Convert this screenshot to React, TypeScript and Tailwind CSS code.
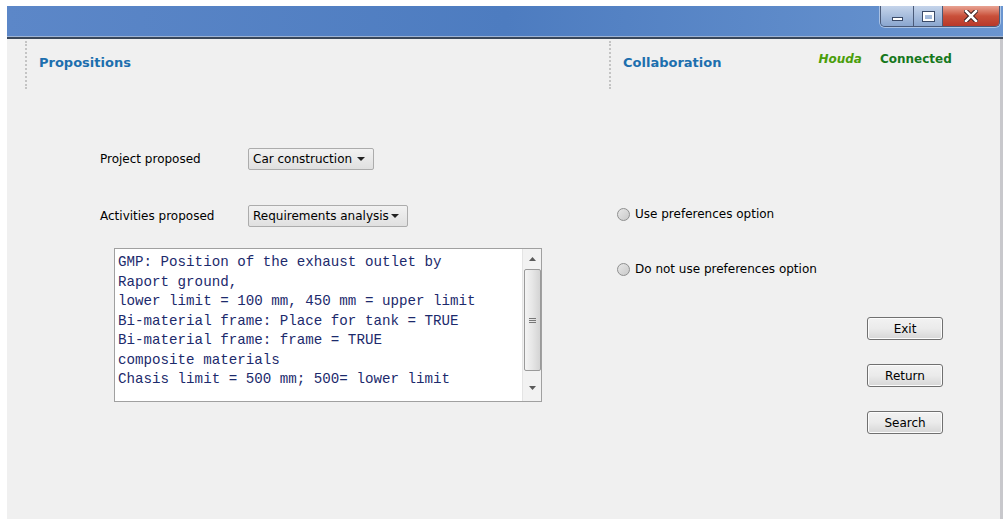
import { useState } from 'react';

const ui = "font-['DejaVu_Sans','Liberation_Sans',sans-serif]";

const ComboBox = ({ value, width }: { value: string; width: string }) => (
    <div
        className={`${width} h-[22px] flex items-center justify-between pl-[4px] pr-[8px] border border-[#acacac] rounded-[2px] bg-gradient-to-b from-[#f2f2f2] to-[#e0e0e0] text-[12px] text-black`}
    >
        <span>{value}</span>
        <svg width="8" height="4" viewBox="0 0 8 4">
            <path d="M0 0h8L4 4z" fill="#222" />
        </svg>
    </div>
);

const Radio = ({ label, checked, onClick }: { label: string; checked: boolean; onClick: () => void }) => (
    <button onClick={onClick} className="flex items-center gap-[5px] text-[12px] text-black">
        <span className="w-[13px] h-[13px] rounded-full border border-[#8e8f8f] bg-gradient-to-br from-[#e8e8e8] to-[#c9c9c9] flex items-center justify-center">
            {checked && <span className="w-[5px] h-[5px] rounded-full bg-[#1a3f8a]" />}
        </span>
        {label}
    </button>
);

const WinButton = ({ label }: { label: string }) => (
    <button className="w-[76px] h-[23px] border border-[#707070] rounded-[3px] bg-gradient-to-b from-[#f2f2f2] via-[#ebebeb] to-[#d6d6d6] text-[12px] text-black shadow-[inset_0_0_0_1px_#fcfcfc]">
        {label}
    </button>
);

const lines = [
    'GMP: Position of the exhaust outlet by',
    'Raport ground,',
    'lower limit = 100 mm, 450 mm = upper limit',
    'Bi-material frame: Place for tank = TRUE',
    'Bi-material frame: frame = TRUE',
    'composite materials',
    'Chasis limit = 500 mm; 500= lower limit',
];

export default function App() {
    const [pref, setPref] = useState<'use' | 'none' | null>(null);

    return (
        <div className={`w-[1003px] h-[519px] bg-white pt-[6px] pl-[7px] flex flex-col ${ui}`}>
            {/* title bar */}
            <div className="h-[30px] shrink-0 relative bg-gradient-to-r from-[#5c87c8] via-[#4d7cc0] to-[#6a95d0]">
                <div className="absolute right-[3px] top-0 flex h-[21px] border border-t-0 border-[#4a5a78] rounded-b-[5px] overflow-hidden shadow-[0_0_0_1px_rgba(255,255,255,0.45)]">
                    <div className="w-[33px] flex items-center justify-center bg-gradient-to-b from-[#c5d4ea] to-[#8aa6cf] border-r border-[#4a5a78]">
                        <span className="w-[11px] h-[4px] mt-[6px] bg-white border border-[#3a4a68]" />
                    </div>
                    <div className="w-[29px] flex items-center justify-center bg-gradient-to-b from-[#c5d4ea] to-[#8aa6cf] border-r border-[#4a5a78]">
                        <span className="w-[11px] h-[9px] border-[2px] border-t-[3px] border-white outline outline-1 outline-[#3a4a68]" />
                    </div>
                    <div className="w-[56px] flex items-center justify-center bg-gradient-to-b from-[#e8a393] via-[#c9503a] to-[#b8382a]">
                        <svg width="14" height="12" viewBox="0 0 14 12">
                            <path d="M2 1l10 10M12 1L2 11" stroke="#3a2020" strokeWidth="4.5" strokeLinecap="square" />
                            <path d="M2 1l10 10M12 1L2 11" stroke="#ffffff" strokeWidth="2.5" strokeLinecap="square" />
                        </svg>
                    </div>
                </div>
            </div>
            <div className="h-[1px] bg-[#9fb4d4]" />
            <div className="h-[2px] bg-[#39475a]" />

            {/* content */}
            <div className="flex-1 flex bg-[#f0f0f0] border-r-[3px] border-[#c8c8cc] text-black">
                {/* propositions */}
                <div className="w-[602px] flex flex-col">
                    <div className="ml-[18px] mt-[2px] h-[48px] pl-[12px] border-l-2 border-dotted border-[#c4c4c4] flex items-start">
                        <span className="mt-[12px] text-[13px] font-bold text-[#1d6fae]">Propositions</span>
                    </div>
                    <div className="mt-[59px] ml-[93px] flex items-center text-[12px]">
                        <span className="w-[148px]">Project proposed</span>
                        <ComboBox value="Car construction" width="w-[126px]" />
                    </div>
                    <div className="mt-[35px] ml-[93px] flex items-center text-[12px]">
                        <span className="w-[148px]">Activities proposed</span>
                        <ComboBox value="Requirements analysis" width="w-[160px]" />
                    </div>
                    <div className="mt-[21px] ml-[107px] w-[428px] h-[154px] flex border border-[#a0a0a0] bg-white">
                        <div className="flex-1 pl-[3px] pt-[4px] font-['Liberation_Mono',monospace] text-[14.2px] leading-[19.5px] text-[#1c2a6c] whitespace-pre">
                            {lines.map(l => <div key={l}>{l}</div>)}
                        </div>
                        <div className="w-[19px] flex flex-col items-center bg-[#f2f2f2] border-l border-[#e4e4e4]">
                            <svg className="mt-[8px]" width="7" height="4" viewBox="0 0 7 4"><path d="M0 4L3.5 0L7 4z" fill="#5a5a5a" /></svg>
                            <div className="mt-[8px] w-[17px] h-[102px] rounded-[2px] border border-[#9a9a9a] bg-gradient-to-r from-[#f4f4f4] via-[#e6e6e6] to-[#d4d4d4] flex flex-col items-center justify-center gap-[1px]">
                                <span className="w-[7px] h-[1px] bg-[#777]" />
                                <span className="w-[7px] h-[1px] bg-[#777]" />
                                <span className="w-[7px] h-[1px] bg-[#777]" />
                            </div>
                            <svg className="mt-[15px]" width="7" height="4" viewBox="0 0 7 4"><path d="M0 0L3.5 4L7 0z" fill="#5a5a5a" /></svg>
                        </div>
                    </div>
                </div>

                {/* collaboration */}
                <div className="flex-1 flex flex-col">
                    <div className="mt-[2px] h-[48px] pl-[12px] border-l-2 border-dotted border-[#c4c4c4] flex items-start">
                        <span className="mt-[12px] text-[13px] font-bold text-[#1d6fae]">Collaboration</span>
                        <span className="ml-[97px] mt-[9px] text-[12px] font-bold italic text-[#4a9e0a]">Houda</span>
                        <span className="ml-[18px] mt-[9px] text-[12px] font-bold text-[#16781c]">Connected</span>
                    </div>
                    <div className="mt-[116px] ml-[8px] flex flex-col gap-[37px] items-start">
                        <Radio label="Use preferences option" checked={pref === 'use'} onClick={() => setPref('use')} />
                        <Radio label="Do not use preferences option" checked={pref === 'none'} onClick={() => setPref('none')} />
                    </div>
                    <div className="mt-[39px] ml-[258px] flex flex-col gap-[24px]">
                        <WinButton label="Exit" />
                        <WinButton label="Return" />
                        <WinButton label="Search" />
                    </div>
                </div>
            </div>
        </div>
    );
}
